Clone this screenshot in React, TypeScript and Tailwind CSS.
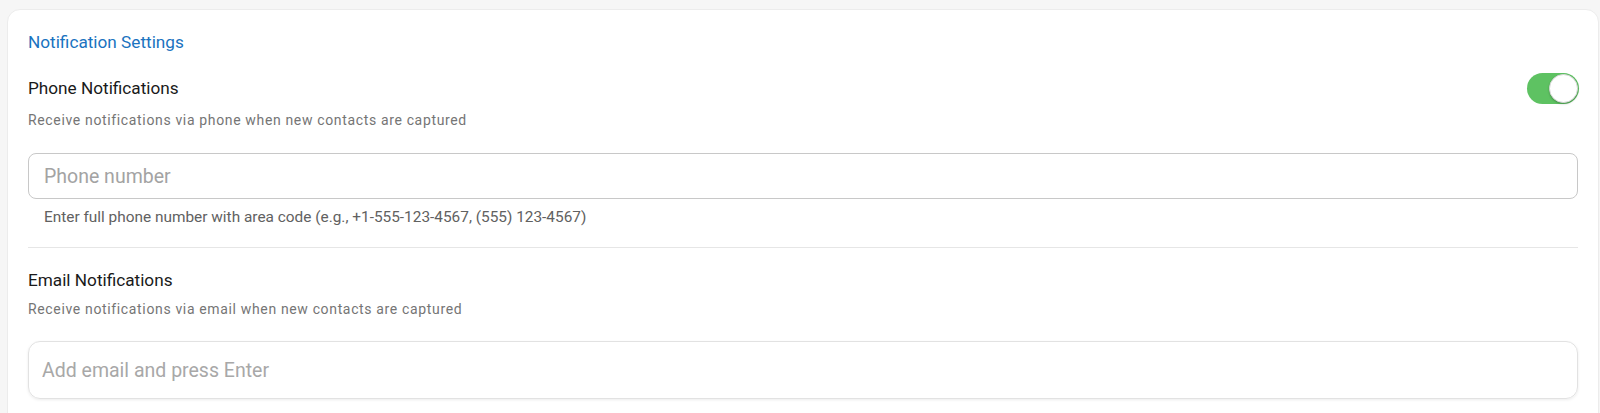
import { useState } from 'react';

export default function App() {
  const [phoneOn, setPhoneOn] = useState(true);
  const [phone, setPhone] = useState('');
  const [email, setEmail] = useState('');

  return (
    <div className="min-h-[413px] bg-[#f6f6f6] pl-[7px] pr-[1px] pt-[9px] font-['Roboto',sans-serif]">
      <div className="rounded-t-[13px] border border-[#ececec] bg-white px-5 pb-6 pt-5">
        <h2 className="text-[17.2px] leading-6 text-[#1a73c0]">Notification Settings</h2>

        {/* Phone */}
        <div className="mt-[19px] flex h-[31px] items-center justify-between">
          <h3 className="text-[17.2px] text-[#1a1a1a]">Phone Notifications</h3>
          <button
            onClick={() => setPhoneOn(v => !v)}
            className={`relative mr-[-1px] h-[31px] w-[52px] rounded-full ${phoneOn ? 'bg-[#5ec262]' : 'bg-[#d9d9d9]'}`}
          >
            <span
              className={`absolute top-[1px] h-[29px] w-[29px] rounded-full border border-[#d8d8d8] bg-white shadow-[0_1px_2px_rgba(0,0,0,0.25)] ${phoneOn ? 'right-[1px]' : 'left-[1px]'}`}
            />
          </button>
        </div>
        <p className="mt-[7px] text-[14px] leading-[18px] tracking-[0.65px] text-[#757575]">
          Receive notifications via phone when new contacts are captured
        </p>
        <input
          value={phone}
          onChange={e => setPhone(e.target.value)}
          placeholder="Phone number"
          className="mt-6 block h-[46px] w-full rounded-lg border border-[#c8c8c8] px-[15px] text-[19.5px] text-[#222] outline-none placeholder:text-[#a3a3a3]"
        />
        <p className="ml-[16px] mt-2 text-[15.4px] leading-5 text-[#616161]">
          Enter full phone number with area code (e.g., +1-555-123-4567, (555) 123-4567)
        </p>

        <div className="mt-5 h-px bg-[#e6e6e6]" />

        {/* Email */}
        <h3 className="mt-5 text-[17.2px] leading-6 text-[#1a1a1a]">Email Notifications</h3>
        <p className="mt-2 text-[14px] leading-[18px] tracking-[0.65px] text-[#757575]">
          Receive notifications via email when new contacts are captured
        </p>
        <input
          value={email}
          onChange={e => setEmail(e.target.value)}
          placeholder="Add email and press Enter"
          className="mt-[23px] block h-[58px] w-full rounded-xl border border-[#e2e2e2] px-[13px] text-[19.5px] text-[#222] shadow-[0_1px_3px_rgba(0,0,0,0.08)] outline-none placeholder:text-[#a8a8a8]"
        />
      </div>
    </div>
  );
}
